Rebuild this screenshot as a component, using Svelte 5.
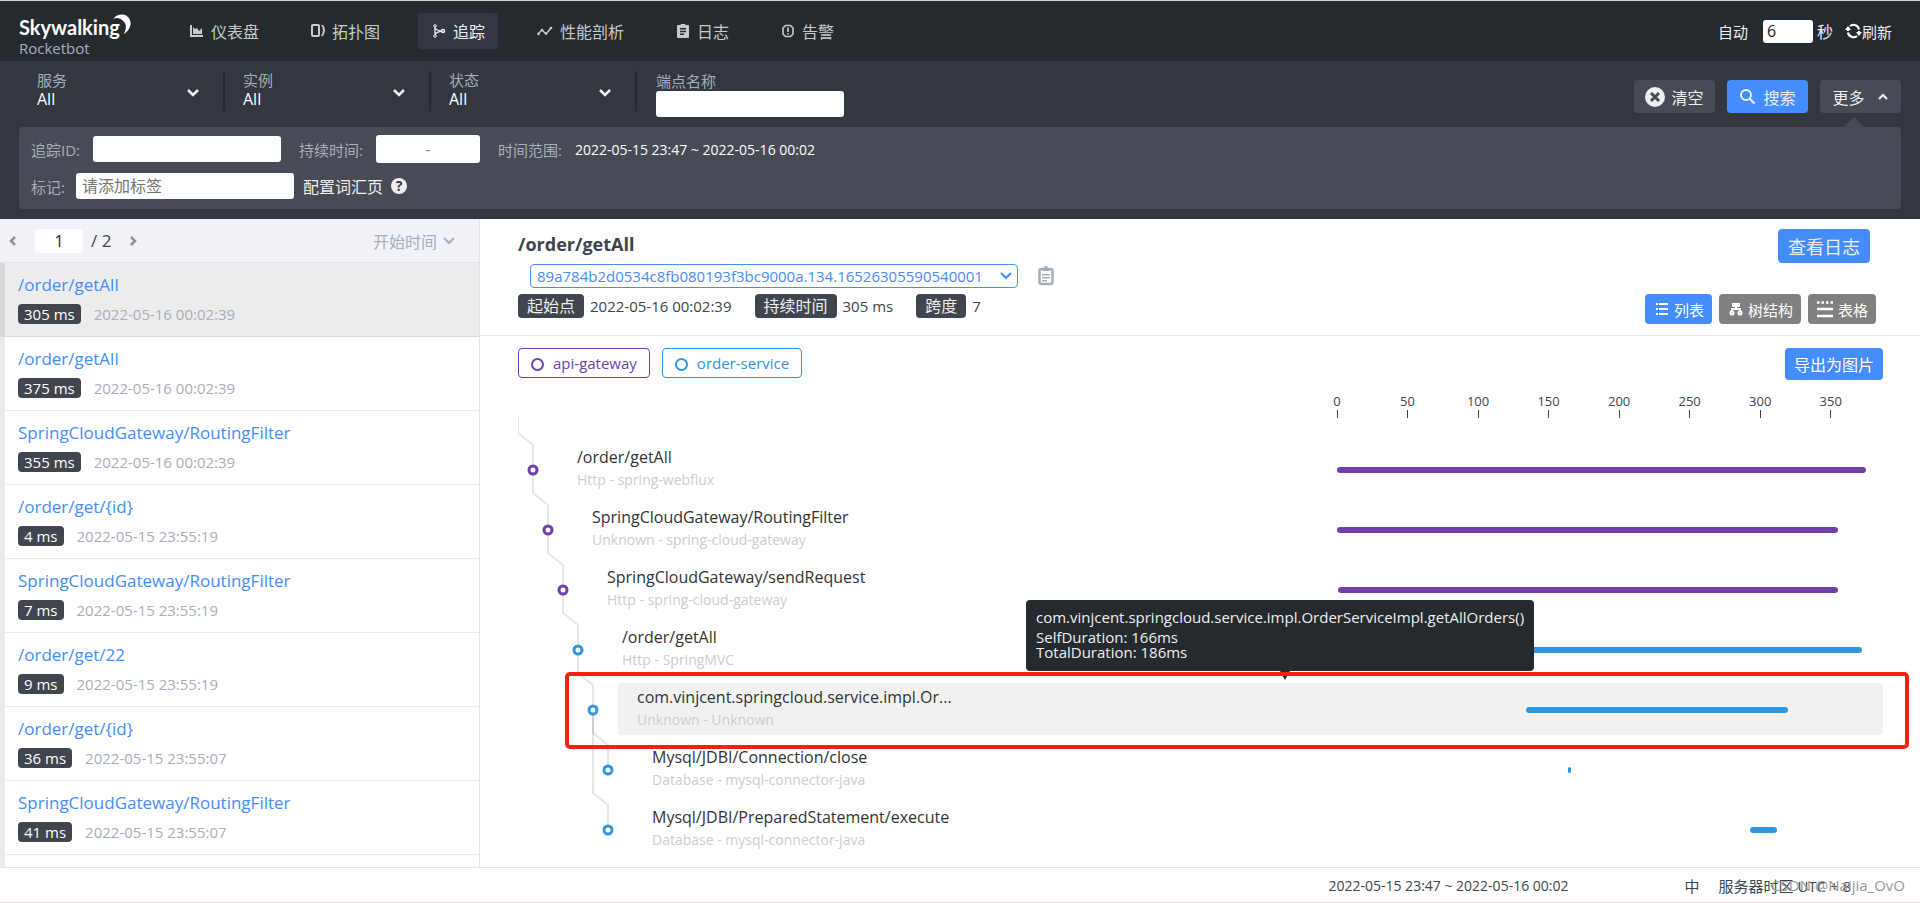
<script lang="ts">
    const traces = [
        { name: "/order/getAll", duration: 305, time: "2022-05-16 00:02:39" },
        { name: "/order/getAll", duration: 375, time: "2022-05-16 00:02:39" },
        { name: "SpringCloudGateway/RoutingFilter", duration: 355, time: "2022-05-16 00:02:39" },
        { name: "/order/get/{id}", duration: 4, time: "2022-05-15 23:55:19" },
        { name: "SpringCloudGateway/RoutingFilter", duration: 7, time: "2022-05-15 23:55:19" },
        { name: "/order/get/22", duration: 9, time: "2022-05-15 23:55:19" },
        { name: "/order/get/{id}", duration: 36, time: "2022-05-15 23:55:07" },
        { name: "SpringCloudGateway/RoutingFilter", duration: 41, time: "2022-05-15 23:55:07" },
    ];

    const spans = [
        { name: "/order/getAll", layer: "Http - spring-webflux", depth: 0, parent: -1, service: "gateway", start: 0, end: 375 },
        { name: "SpringCloudGateway/RoutingFilter", layer: "Unknown - spring-cloud-gateway", depth: 1, parent: 0, service: "gateway", start: 0, end: 355 },
        { name: "SpringCloudGateway/sendRequest", layer: "Http - spring-cloud-gateway", depth: 2, parent: 1, service: "gateway", start: 1, end: 355 },
        { name: "/order/getAll", layer: "Http - SpringMVC", depth: 3, parent: 2, service: "order", start: 67, end: 372 },
        { name: "com.vinjcent.springcloud.service.impl.Or...", layer: "Unknown - Unknown", depth: 4, parent: 3, service: "order", start: 134, end: 320 },
        { name: "Mysql/JDBI/Connection/close", layer: "Database - mysql-connector-java", depth: 5, parent: 4, service: "order", start: 164, end: 165 },
        { name: "Mysql/JDBI/PreparedStatement/execute", layer: "Database - mysql-connector-java", depth: 5, parent: 4, service: "order", start: 293, end: 312 },
    ];

    const ticks = [0, 50, 100, 150, 200, 250, 300, 350];
    const maxTime = 375;
    const rowHeight = 60;
    const indent = 15;

    let selected = $state(0);
    let hovered = $state(4);
    let tab = $state("list");

    const nodeX = (depth: number) => 15 + depth * indent;
    const nodeY = (row: number) => 54 + row * rowHeight;

    function link(row: number) {
        const span = spans[row];
        const x = nodeX(span.depth);
        const y = nodeY(row);
        const top = span.parent < 0 ? 0 : nodeY(span.parent);
        return `M${x - indent} ${top}V${y - 37}L${x} ${y - 25}V${y}`;
    }
</script>

<div class="app">
    <header class="topbar">
        <div class="brand">
            <div class="logo">
                <span>Skywalking</span>
                <svg class="moon" width="20" height="22" viewBox="0 0 20 22"><path d="M1 5C6-1 15-1 18 6c2 5-1 11-6 14 2-5 3-9 0-12C9 4 5 3 1 5z" fill="#fff" /></svg>
            </div>
            <div class="sub">Rocketbot</div>
        </div>
        <nav>
            <a href="#dashboard">
                <svg width="14" height="14" viewBox="0 0 14 14"><path d="M1 1v11h12" fill="none" stroke="currentColor" stroke-width="2" /><path d="M3 10V3l2 2 2-1 2 3 3-3v6z" fill="currentColor" /></svg>
                仪表盘
            </a>
            <a href="#topology">
                <svg width="14" height="14" viewBox="0 0 14 14"><rect x="1" y="1" width="7" height="11" rx="1" fill="none" stroke="currentColor" stroke-width="2" /><path d="M10 1h2q2 2 2 5t-2 6h-2q2-3 2-6t-2-5z" fill="currentColor" /></svg>
                拓扑图
            </a>
            <a href="#trace" class="active">
                <svg width="14" height="14" viewBox="0 0 14 14"><g fill="none" stroke="currentColor"><path d="M3 3v8M3 4q2 3 7 3M3 11q1-3 7-4" stroke-width="1.3" /><circle cx="3" cy="2" r="1.3" /><circle cx="3" cy="12" r="1.3" /><circle cx="11" cy="7" r="1.5" stroke-width="1.5" /></g></svg>
                追踪
            </a>
            <a href="#profile">
                <svg width="16" height="14" viewBox="0 0 16 14"><path d="M1 10l4-4 4 4 5-6" fill="none" stroke="currentColor" stroke-width="1.5" /><g fill="currentColor"><circle cx="1.5" cy="10" r="1.3" /><circle cx="5" cy="6" r="1.3" /><circle cx="9" cy="9.5" r="1.3" /><circle cx="14" cy="4" r="1.3" /></g></svg>
                性能剖析
            </a>
            <a href="#log">
                <svg width="14" height="14" viewBox="0 0 14 14"><path fill="currentColor" fill-rule="evenodd" d="M2 1h2.500a2.500 2 0 0 1 5 0H12a1 1 0 0 1 1 1v11a1 1 0 0 1-1 1H2a1 1 0 0 1-1-1V2a1 1 0 0 1 1-1zM4 4v1.500h6V4zM4 6.800v1.500h6V6.800zM4 9.600v1.400h4V9.600z" /></svg>
                日志
            </a>
            <a href="#alarm">
                <svg width="14" height="14" viewBox="0 0 14 14"><path d="M4.500 1.500h5L12 4v6l-2.500 2.500h-5L2 10V4z" fill="none" stroke="currentColor" stroke-width="1.600" /><path d="M6.200 3.500h1.600v4.500H6.200zM6.200 9h1.600v1.600H6.200z" fill="currentColor" /></svg>
                告警
            </a>
        </nav>
        <div class="reload">
            <label for="interval">自动</label>
            <input id="interval" type="text" value="6" />
            <span class="unit">秒</span>
            <button type="button">
                <svg width="17" height="16" viewBox="0 0 17 16"><g fill="none" stroke="#fff" stroke-width="2.200"><path d="M3 9.500a5.600 5.600 0 0 0 9 3.500M14 6.500A5.600 5.600 0 0 0 5 3M3 8a6 6 0 0 1 1-3.500M14 8a6 6 0 0 1-1 3.500" /></g><path d="M0 7h6L3 3zM11 9h6l-3 4z" fill="#fff" /></svg>刷新
            </button>
        </div>
    </header>

    <section class="filters">
        <div class="filter-row">
            {#each ["服务", "实例", "状态"] as label, i}
                <div class="picker">
                    <div class="picker-text">
                        <label for="picker-{i}">{label}</label>
                        <select id="picker-{i}"><option>All</option></select>
                    </div>
                    <svg width="14" height="10" viewBox="0 0 14 10"><path d="M2 2l5 5 5-5" fill="none" stroke="#efefef" stroke-width="2.500" /></svg>
                </div>
            {/each}
            <div class="endpoint">
                <label for="endpoint">端点名称</label>
                <input id="endpoint" type="text" />
            </div>
            <div class="actions">
                <button type="button" class="dark">
                    <svg width="20" height="20" viewBox="0 0 20 20"><circle cx="10" cy="10" r="10" fill="#efefef" /><path d="M6 6l8 8M14 6l-8 8" stroke="#484b55" stroke-width="3" /></svg>
                    清空
                </button>
                <button type="button" class="blue">
                    <svg width="18" height="18" viewBox="0 0 18 18"><circle cx="7" cy="7" r="5" fill="none" stroke="currentColor" stroke-width="2" /><path d="M10.500 10.500l5 5" stroke="currentColor" stroke-width="2.200" /></svg>
                    搜索
                </button>
                <button type="button" class="dark more">
                    更多
                    <svg width="12" height="10" viewBox="0 0 12 10"><path d="M2 7l4-4 4 4" fill="none" stroke="#efefef" stroke-width="2.200" /></svg>
                </button>
            </div>
        </div>
        <div class="extra">
            <div class="extra-row">
                <label for="trace-id">追踪ID:</label>
                <input id="trace-id" class="trace-id" type="text" />
                <label for="duration">持续时间:</label>
                <input id="duration" class="duration" type="text" placeholder="-" />
                <span class="muted">时间范围:</span>
                <span class="range">2022-05-15 23:47 ~ 2022-05-16 00:02</span>
            </div>
            <div class="extra-row second">
                <label for="tags">标记:</label>
                <input id="tags" class="tags" type="text" placeholder="请添加标签" />
                <a href="#vocabulary">配置词汇页</a>
                <span class="help">?</span>
            </div>
        </div>
    </section>

    <main>
        <aside>
            <div class="pager">
                <button type="button" aria-label="previous"><svg width="10" height="12" viewBox="0 0 10 12"><path d="M7 2L3 6l4 4" fill="none" stroke="#8d9199" stroke-width="2.500" /></svg></button>
                <input type="text" value="1" aria-label="page" />
                <span>/ 2</span>
                <button type="button" aria-label="next"><svg width="10" height="12" viewBox="0 0 10 12"><path d="M3 2l4 4-4 4" fill="none" stroke="#8d9199" stroke-width="2.500" /></svg></button>
                <button type="button" class="sort">
                    开始时间
                    <svg width="12" height="10" viewBox="0 0 12 10"><path d="M1 2l5 5 5-5" fill="none" stroke="#a7aebb" stroke-width="2" /></svg>
                </button>
            </div>
            <ul>
                {#each traces as trace, i}
                    <li class:selected={selected === i}>
                        <button type="button" onclick={() => (selected = i)}>
                            <span class="trace-name">{trace.name}</span>
                            <span class="trace-info"><b class="pill">{trace.duration} ms</b>{trace.time}</span>
                        </button>
                    </li>
                {/each}
            </ul>
        </aside>

        <section class="detail">
            <div class="detail-head">
                <div class="detail-info">
                    <h1>/order/getAll</h1>
                    <div class="id-row">
                        <div class="id-box">
                            <select aria-label="trace id"><option>89a784b2d0534c8fb080193f3bc9000a.134.16526305590540001</option></select>
                            <svg width="12" height="10" viewBox="0 0 12 10"><path d="M1 2l5 5 5-5" fill="none" stroke="#448dfe" stroke-width="2" /></svg>
                        </div>
                        <svg width="16" height="20" viewBox="0 0 16 20"><rect x="1.500" y="3" width="13" height="15" rx="2" fill="none" stroke="#a7aebb" stroke-width="2.500" /><path d="M4 2h2a2 2 0 0 1 4 0h2v3H4zM4 8h8v1.500H4zM4 11h8v1.500H4zM4 14h5v1.500H4z" fill="#a7aebb" /></svg>
                    </div>
                    <div class="facts">
                        <b class="tag">起始点</b><span>2022-05-16 00:02:39</span>
                        <b class="tag">持续时间</b><span>305 ms</span>
                        <b class="tag">跨度</b><span>7</span>
                    </div>
                </div>
                <div class="detail-side">
                    <button type="button" class="logs">查看日志</button>
                    <div class="tabs">
                        <button type="button" class:on={tab === "list"} onclick={() => (tab = "list")}>
                            <svg width="14" height="14" viewBox="0 0 14 14"><path d="M1 2h2M1 7h2M1 12h2M4 2h9M4 7h9M4 12h9" stroke="#fff" stroke-width="2" /></svg>
                            列表
                        </button>
                        <button type="button" class:on={tab === "tree"} onclick={() => (tab = "tree")}>
                            <svg width="14" height="14" viewBox="0 0 14 14"><path d="M3 1h8v4H3z" fill="#fff" /><path d="M7 5v2M3 9V7h8v2" fill="none" stroke="#fff" stroke-width="2" /><rect x="1.500" y="9.500" width="3" height="3" rx="1" fill="none" stroke="#fff" stroke-width="2" /><rect x="9.500" y="9.500" width="3" height="3" rx="1" fill="none" stroke="#fff" stroke-width="2" /></svg>
                            树结构
                        </button>
                        <button type="button" class="table" class:on={tab === "table"} onclick={() => (tab = "table")}>
                            <svg width="16" height="18" viewBox="0 0 16 18"><path d="M0 9h16M0 16h16" stroke="#fff" stroke-width="2.500" /><path d="M0 2.500h16" stroke="#fff" stroke-width="2.500" stroke-dasharray="2.500 2" /></svg>
                            表格
                        </button>
                    </div>
                </div>
            </div>

            <div class="chart">
                <div class="legend">
                    <span class="service gateway"><i></i>api-gateway</span>
                    <span class="service order"><i></i>order-service</span>
                    <button type="button" class="export">导出为图片</button>
                </div>

                <div class="span-grid axis">
                    <div></div>
                    <div class="track">
                        {#each ticks as t}
                            <span class="tick" style="left: {(t / maxTime) * 100}%">{t}</span>
                        {/each}
                    </div>
                </div>

                <div class="tree">
                    <svg class="links" width="120" height="440">
                        {#each spans as span, i}
                            <path class="link" d={link(i)} />
                        {/each}
                        {#each spans as span, i}
                            <circle class="node {span.service}" cx={nodeX(span.depth)} cy={nodeY(i)} r="4" />
                        {/each}
                    </svg>
                    {#each spans as span, i}
                        <div class="span-row" style="padding-left: {40 + span.depth * indent}px" role="presentation" onmouseenter={() => (hovered = i)}>
                            <div class="span-body" class:hovered={hovered === i}>
                                <div class="span-name">{span.name}</div>
                                <div class="span-layer">{span.layer}</div>
                            </div>
                            <div class="span-grid lane">
                                <div></div>
                                <div class="track">
                                    <div class="bar {span.service}" style="left: {(span.start / maxTime) * 100}%; width: {((span.end - span.start) / maxTime) * 100}%"></div>
                                </div>
                            </div>
                        </div>
                    {/each}
                    <div class="tooltip">
                        <p>com.vinjcent.springcloud.service.impl.OrderServiceImpl.getAllOrders()</p>
                        <div>SelfDuration: 166ms</div>
                        <div>TotalDuration: 186ms</div>
                    </div>
                    <div class="frame"></div>
                </div>
            </div>
        </section>
    </main>

    <footer>
        <span class="when">2022-05-15 23:47 ~ 2022-05-16 00:02</span>
        <span class="lang">中</span>
        <span>服务器时区 UTC + 8</span>
        <span class="watermark">CSDN @Naijia_OvO</span>
    </footer>
</div>

<style>
    :global(body) {
        font-family: "Open Sans", "Noto Sans CJK SC", sans-serif;
        font-size: 15px;
        color: #3d444f;
    }

    .app {
        display: flex;
        flex-direction: column;
        height: 100vh;
        background: #fff;
        overflow: hidden;
    }

    .app :global(*) {
        box-sizing: border-box;
    }

    button,
    input,
    select {
        font: inherit;
        color: inherit;
        border: 0;
        padding: 0;
        margin: 0;
        outline: none;
    }

    button {
        display: flex;
        align-items: center;
        background: none;
        cursor: pointer;
        white-space: nowrap;
    }

    select {
        appearance: none;
        background: none;
    }

    input {
        background: #fff;
        border-radius: 3px;
        color: #222;
    }

    svg {
        flex: none;
    }

    a {
        color: inherit;
        text-decoration: none;
    }

    /* top bar */
    .topbar {
        flex: none;
        display: flex;
        align-items: center;
        height: 61px;
        padding: 0 28px 0 19px;
        background: #252a2f;
        border-top: 1px solid #cfd5d5;
        color: #efefef;
    }

    .brand {
        width: 157px;
        padding-top: 8px;
    }

    .logo {
        display: flex;
        height: 25px;
        font: 700 20px/28px Lato, sans-serif;
        color: #fff;
    }

    .moon {
        margin: 1px 0 0 -8px;
    }

    .sub {
        line-height: 20px;
        color: #a7aebb;
    }

    nav {
        display: flex;
        gap: 25px;
    }

    nav a {
        display: flex;
        align-items: center;
        gap: 7px;
        height: 36px;
        padding: 0 13px 0 14px;
        border-radius: 4px;
        font-size: 16px;
        color: #c8cacc;
    }

    nav a.active {
        background: #333743;
        color: #efefef;
    }

    .reload {
        display: flex;
        align-items: center;
        margin-left: auto;
    }

    .reload input {
        width: 50px;
        height: 23px;
        margin: 0 4px 0 15px;
        padding-left: 4px;
        font-size: 16px;
    }

    .reload .unit {
        font-size: 16px;
        margin-right: 12px;
    }

    /* search conditions */
    .filters {
        flex: none;
        padding: 10px 19px;
        background: #333740;
        color: #efefef;
    }

    .filter-row {
        display: flex;
        align-items: flex-start;
        height: 56px;
    }

    .picker {
        display: flex;
        align-items: center;
        width: 206px;
        height: 40px;
        padding: 0 23px 0 18px;
        border-right: 2px solid #252a2f;
    }

    .picker-text {
        flex: 1;
        align-self: flex-start;
    }

    .picker svg {
        margin-top: 4px;
    }

    .picker label,
    .endpoint label {
        display: block;
        line-height: 20px;
        color: #a7aebb;
    }

    .picker label {
        line-height: 18px;
    }

    .picker select {
        display: block;
        width: 100%;
        height: 20px;
        font-size: 16px;
        line-height: 20px;
        color: #fff;
    }

    .endpoint {
        padding-left: 19px;
    }

    .endpoint input,
    .trace-id {
        display: block;
        width: 188px;
        height: 26px;
    }

    .actions {
        display: flex;
        gap: 12px;
        margin: 9px 0 0 auto;
    }

    .actions button {
        justify-content: center;
        gap: 6px;
        width: 81px;
        height: 33px;
        border-radius: 4px;
        font-size: 16px;
    }

    .dark {
        background: #484b55;
    }

    .blue {
        background: #448dfe;
    }

    .actions .more {
        position: relative;
        gap: 12px;
    }

    .more::after {
        content: "";
        position: absolute;
        left: 24px;
        top: 37px;
        border: 10px solid transparent;
        border-top: 0;
        border-bottom-color: #484b55;
    }

    .extra {
        height: 82px;
        padding: 8px 12px;
        background: #484b55;
        border-radius: 3px;
    }

    .extra-row {
        display: flex;
        align-items: center;
        height: 28px;
    }

    .extra-row.second {
        margin-top: 9px;
    }

    .extra label,
    .muted {
        color: #a7aebb;
    }

    .trace-id {
        margin: 0 18px 0 13px;
    }

    .duration {
        width: 104px;
        height: 28px;
        margin: 0 18px 0 13px;
        text-align: center;
    }

    .range {
        margin-left: 13px;
        font-size: 14px;
        color: #fff;
    }

    .tags {
        width: 218px;
        height: 26px;
        margin: 0 9px 0 11px;
        padding-left: 6px;
        font-size: 16px;
    }

    .extra a {
        font-size: 16px;
    }

    .help {
        width: 16px;
        height: 16px;
        margin-left: 8px;
        border-radius: 50%;
        background: #efefef;
        color: #333740;
        font-size: 14px;
        font-weight: 700;
        line-height: 16px;
        text-align: center;
    }

    /* trace list */
    main {
        flex: 1;
        display: flex;
        min-height: 0;
    }

    aside {
        display: flex;
        flex-direction: column;
        width: 25%;
        border-right: 1px solid #e3e4e8;
    }

    .pager {
        flex: none;
        display: flex;
        align-items: center;
        height: 44px;
        padding: 0 24px 0 8px;
        background: #f2f3f8;
        border-bottom: 1px solid #e3e4e8;
        font-size: 16px;
    }

    .pager input {
        width: 48px;
        height: 24px;
        margin: 0 8px 0 17px;
        text-align: center;
    }

    .pager span {
        margin-right: 17px;
        font-size: 17px;
    }

    .sort {
        gap: 6px;
        margin-left: auto;
        color: #a7aebb;
    }

    ul {
        flex: 1;
        min-height: 0;
        margin: 0;
        padding: 0;
        border-left: 5px solid #eaeaea;
        list-style: none;
    }

    li {
        height: 74px;
        margin-left: -5px;
        border-left: 5px solid #eaeaea;
        border-bottom: 1px solid #eaeaea;
    }

    li.selected {
        border-color: #d8d8d8;
        background: #ececec;
    }

    li button {
        flex-direction: column;
        align-items: flex-start;
        width: 100%;
        padding: 10px 13px;
    }

    .trace-name {
        font-size: 17px;
        line-height: 24px;
        color: #448dfe;
    }

    .trace-info {
        display: flex;
        align-items: center;
        gap: 13px;
        margin-top: 7px;
        line-height: 20px;
        color: #a7aebb;
    }

    .pill {
        padding: 0 6px;
        border-radius: 4px;
        background: #40454e;
        color: #fff;
        font-weight: 400;
    }

    /* trace detail */
    .detail {
        flex: 1;
        min-width: 0;
    }

    .detail-head {
        display: flex;
        justify-content: space-between;
        height: 117px;
        padding: 10px 44px 0 38px;
        border-bottom: 1px solid #e3e4e8;
    }

    h1 {
        margin: 0;
        font-size: 18px;
        line-height: 30px;
    }

    .id-row {
        display: flex;
        align-items: center;
        gap: 20px;
        margin: 5px 0 6px 12px;
    }

    .id-box {
        display: flex;
        align-items: center;
        height: 24px;
        padding: 0 5px 0 6px;
        border: 1px solid #448dfe;
        border-radius: 4px;
        color: #448dfe;
    }

    .id-box select {
        width: 463px;
        line-height: 20px;
    }

    .facts {
        display: flex;
        align-items: center;
        gap: 6px;
    }

    .facts span {
        margin-right: 17px;
    }

    .tag {
        padding: 0 9px;
        border-radius: 4px;
        background: #40454e;
        color: #efefef;
        font-size: 16px;
        font-weight: 400;
        line-height: 24px;
    }

    .detail-side {
        display: flex;
        flex-direction: column;
        align-items: flex-end;
        justify-content: space-between;
        padding-bottom: 11px;
    }

    .logs {
        height: 34px;
        margin-right: 6px;
        padding: 0 10px;
        border-radius: 4px;
        background: #448dfe;
        color: #efefef;
        font-size: 18px;
    }

    .tabs {
        display: flex;
        gap: 7px;
    }

    .tabs button {
        gap: 5px;
        height: 30px;
        padding: 0 8px 0 10px;
        border-radius: 4px;
        background: #808080;
        color: #fff;
    }

    .tabs button.table {
        padding-left: 9px;
    }

    .tabs button.on {
        background: #448dfe;
    }

    .chart {
        padding: 12px 37px 0 38px;
    }

    .legend {
        display: flex;
        align-items: flex-start;
        gap: 12px;
        height: 38px;
    }

    .service {
        display: flex;
        align-items: center;
        gap: 9px;
        height: 30px;
        padding: 0 12px;
        border: 1px solid currentColor;
        border-radius: 4px;
    }

    .service i {
        width: 13px;
        height: 13px;
        margin-top: 3px;
        border: 2px solid currentColor;
        border-radius: 50%;
    }

    .service.gateway {
        color: #6f3fab;
    }

    .service.order {
        color: #2f96e0;
    }

    .export {
        height: 32px;
        margin-left: auto;
        padding: 0 9px;
        border-radius: 4px;
        background: #448dfe;
        color: #fff;
        font-size: 16px;
    }

    .span-grid {
        display: grid;
        grid-template-columns: 819fr 529fr;
        padding-right: 17px;
    }

    .axis {
        height: 30px;
    }

    .track {
        position: relative;
    }

    .tick {
        position: absolute;
        top: 6px;
        width: 40px;
        margin-left: -20px;
        font-size: 13px;
        line-height: 18px;
        text-align: center;
    }

    .tick::after {
        content: "";
        display: block;
        width: 1px;
        height: 8px;
        margin: 0 auto;
        background: #3d444f;
    }

    .tree {
        position: relative;
        padding-top: 24px;
    }

    .links {
        position: absolute;
        left: 0;
        top: 0;
    }

    .link {
        fill: none;
        stroke: #000;
        stroke-opacity: 0.1;
        stroke-width: 2px;
    }

    .node {
        fill: #fff;
        stroke-width: 3px;
    }

    .node.gateway {
        stroke: #6f3fab;
    }

    .node.order {
        stroke: #2f96e0;
    }

    .span-row {
        position: relative;
        display: flex;
        align-items: flex-start;
        height: 60px;
        padding-top: 3px;
    }

    .span-body {
        flex: 1;
        height: 52px;
        padding: 2px 19px;
        border-radius: 3px;
    }

    .span-body.hovered {
        background: #f1f1f1;
    }

    .span-name {
        font-size: 16px;
        line-height: 24px;
        color: #333;
    }

    .span-layer {
        font-size: 14px;
        line-height: 22px;
        color: #ccc;
    }

    .lane {
        position: absolute;
        inset: 27px 0 auto;
    }

    .bar {
        position: absolute;
        height: 6px;
        min-width: 3px;
        border-radius: 3px;
    }

    .bar.gateway {
        background: #6f3fab;
    }

    .bar.order {
        background: #2f96e0;
    }

    .frame {
        position: absolute;
        left: 47px;
        right: -26px;
        top: 256px;
        height: 77px;
        border: 4px solid #ff1e10;
        border-radius: 5px;
    }

    .tooltip {
        position: absolute;
        left: 508px;
        top: 184px;
        height: 71px;
        padding: 6px 10px;
        border-radius: 4px;
        background: #252a2f;
        color: #efefef;
        line-height: 15px;
        white-space: nowrap;
    }

    .tooltip p {
        margin: 0 0 2px;
        line-height: 22px;
    }

    .tooltip::after {
        content: "";
        position: absolute;
        left: 50%;
        top: 100%;
        border: 5px solid transparent;
        border-top: 9px solid #252a2f;
        border-bottom: 0;
    }

    footer {
        position: relative;
        flex: none;
        display: flex;
        align-items: center;
        justify-content: flex-end;
        height: 36px;
        padding-right: 69px;
        border-top: 1px solid #e3e4e8;
        border-bottom: 1px solid #e6dadd;
        background: #fff;
    }

    .when {
        margin-right: 116px;
        font-size: 14px;
    }

    .lang {
        margin-right: 19px;
    }

    .watermark {
        position: absolute;
        right: 15px;
        color: #999;
    }
</style>
